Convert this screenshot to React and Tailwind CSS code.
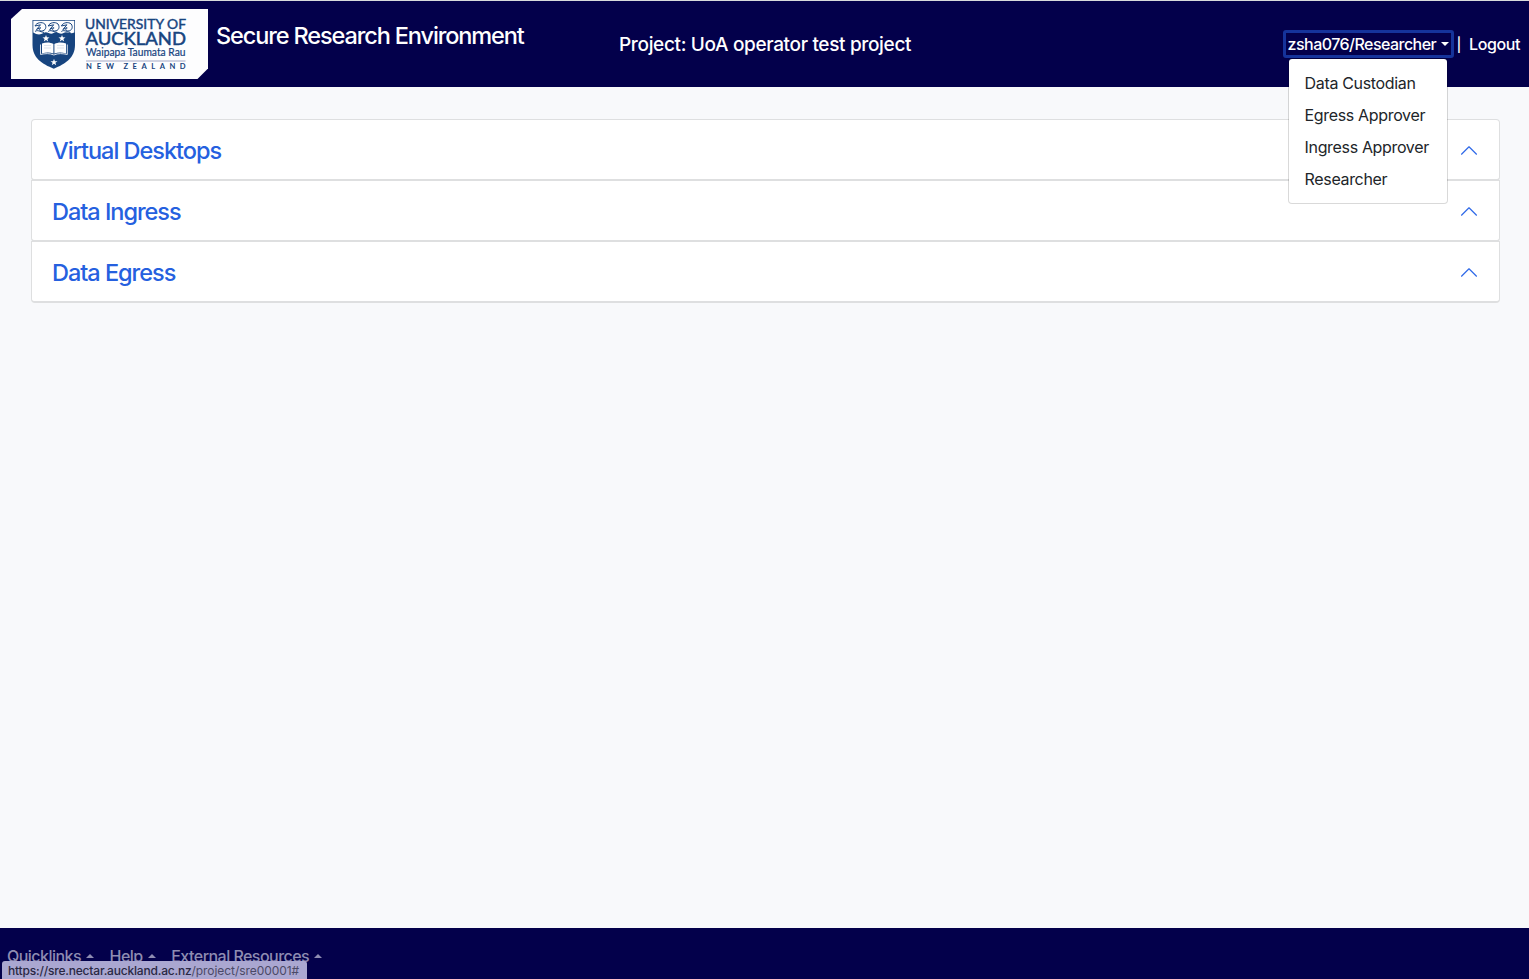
import React from "react";

const star = "M0 -3.6L.9 -1.15L3.5 -1.1L1.4 .45L2.2 3L0 1.5L-2.2 3L-1.4 .45L-3.5 -1.1L-.9 -1.15Z";

function Logo() {
  return (
    <svg width="198" height="71" viewBox="11 9 198 71" className="block shrink-0" role="img" aria-label="University of Auckland">
      <path d="M22 9H208V68.500L197.500 79H11V19Z" fill="#fdfdfe" />
      <path d="M32.500 20H75V45C75 58 65 64 53.800 68.700C42 64 32.500 58 32.500 45Z" fill="#17447f" />
      <path d="M33.300 20.800H74.300V32.500C70 34.800 67 30.500 63.500 33C60 35.300 57 30.500 53.500 33C50 35.300 47 30.500 43.500 33C40 35.300 36.500 34.500 33.300 32.500Z" fill="#fdfdfe" />
      {[0, 13.2, 26.4].map((x) => (
        <path
          key={x}
          transform={`translate(${x} 0)`}
          d="M35 26C36.500 22.500 42 21.500 44.800 24C47 27 45.500 31 41.500 31C38.500 31 39 28 41 28M35 26L40.500 24.800L36.500 29.500L40.500 27.500M35 31.500C37.500 29.500 39.500 31.500 44 32.500"
          fill="none"
          stroke="#17447f"
          strokeWidth="1"
        />
      ))}
      <g fill="#fdfdfe">
        <path d={star} transform="translate(46 38.500)" />
        <path d={star} transform="translate(62 38.500)" />
        <path d={star} transform="translate(54 62.300)" />
        <path d="M42 43.500C46 42 50 42 53.400 44V53.500C50 52 46 52 42 53.500ZM54.400 44C58 42 62 42 66 43.500V53.500C62 52 58 52 54.400 53.500Z" />
      </g>
      <path d="M40.500 44.500V54.500C45 53.500 49.500 53 53.900 55C58 53 63 53.500 67.300 54.500V44.500" fill="none" stroke="#d7dfeb" strokeWidth="1" />
      <path d="M44 45.500H51M44 48H51M57 45.500H64M57 48H64" stroke="#c8d2e1" strokeWidth=".6" />
      <g fill="#17447f" fontFamily="Lato, sans-serif">
        <text x="85" y="29" fontSize="12.800" textLength="101" lengthAdjust="spacingAndGlyphs" stroke="#17447f" strokeWidth=".4">UNIVERSITY OF</text>
        <text x="85.500" y="45.200" fontSize="18" textLength="100.500" lengthAdjust="spacingAndGlyphs" stroke="#17447f" strokeWidth=".5">AUCKLAND</text>
        <text x="86" y="56" fontSize="10.500" textLength="99.500" lengthAdjust="spacingAndGlyphs" stroke="#17447f" strokeWidth=".2">Waipapa Taumata Rau</text>
        <text x="86" y="69" fontSize="7.600" fontWeight="700" textLength="28" lengthAdjust="spacing">NEW</text>
        <text x="123.500" y="69" fontSize="7.600" fontWeight="700" textLength="62" lengthAdjust="spacing">ZEALAND</text>
      </g>
      <path d="M86 61H185.500" stroke="#a3a8c4" strokeWidth="1.200" />
    </svg>
  );
}

function Section({ title }) {
  return (
    <section className="-mb-px flex h-[62px] items-center justify-between rounded-b border border-b-2 border-[#dedfe0] bg-white pr-[22px] pl-5 first:rounded-t">
      <h2 className="pt-[3px] text-[23.5px] font-[450] tracking-[-1.02px] text-[#2560df]">{title}</h2>
      <svg width="16" height="9" viewBox="0 0 16 9" fill="none" stroke="#2f69e8" strokeWidth="1.200" strokeLinecap="round" strokeLinejoin="round" className="mt-px">
        <path d="M.5 8.200L8 .8L15.500 8.200" />
      </svg>
    </section>
  );
}

function FooterItem({ children }) {
  return (
    <a className="flex items-center gap-[5px]">
      {children}
      <svg width="8" height="4" viewBox="0 0 8 4" fill="currentColor"><path d="M0 4L4 0L8 4Z" /></svg>
    </a>
  );
}

export default function App() {
  return (
    <div className="flex h-[979px] w-[1529px] flex-col overflow-hidden bg-[#f8f9fb] font-['Inter',sans-serif]">
      <header className="flex h-[87px] shrink-0 border-t border-[#d8dbdc] bg-[#03004b] text-white">
        <div className="flex w-[619px] pt-2 pl-[11px]">
          <Logo />
          <h1 className="ml-[7px] pt-[9px] text-[23.5px] leading-9 font-medium tracking-[-1.12px] whitespace-nowrap">Secure Research Environment</h1>
        </div>
        <div className="flex flex-1 items-center pt-[3px] text-[19px] font-medium tracking-[-0.34px] whitespace-nowrap">Project: UoA operator test project</div>
        <nav className="flex items-center pr-[9px] text-base font-medium tracking-[-0.4px] whitespace-nowrap">
          <div className="relative">
            <button className="flex h-7 w-[171px] items-center justify-between rounded-[3px] border-3 border-[#15339b] px-[2px] tracking-[-0.54px]">
              zsha076/Researcher
              <svg width="8" height="4" viewBox="0 0 8 4" fill="currentColor"><path d="M0 0H8L4 4Z" /></svg>
            </button>
            <ul className="absolute top-[28px] left-[5px] z-10 h-[146px] w-[160px] rounded border border-black/15 bg-white bg-clip-padding py-2 text-base font-normal tracking-[-0.34px] text-[#212529]">
              {["Data Custodian", "Egress Approver", "Ingress Approver", "Researcher"].map((role) => (
                <li key={role} className="flex h-8 items-center px-4">{role}</li>
              ))}
            </ul>
          </div>
          <span className="ml-[3px] text-[14px]">|</span>
          <a className="ml-[8px]">Logout</a>
        </nav>
      </header>
      <main className="flex-1 pt-8 pr-[29px] pl-[31px]">
        <Section title="Virtual Desktops" />
        <Section title="Data Ingress" />
        <Section title="Data Egress" />
      </main>
      <footer className="relative h-[51px] shrink-0 bg-[#03004b] pt-4 pl-[7px]">
        <div className="flex gap-[15.5px] text-base font-medium tracking-[-0.53px] whitespace-nowrap text-[#8e8cb2]">
          <FooterItem>Quicklinks</FooterItem>
          <FooterItem>Help</FooterItem>
          <FooterItem>External Resources</FooterItem>
        </div>
        <div className="absolute bottom-0 left-[2px] flex h-[18px] w-[305px] items-center rounded-t-[3px] bg-[#aaa7d1] pt-px pl-[6px] text-[12px] tracking-[-0.06px] whitespace-nowrap text-[#4b4966]">
          <span className="font-medium tracking-[-0.19px] text-[#292743]">https://sre.nectar.auckland.ac.nz</span>/project/sre00001#
        </div>
      </footer>
    </div>
  );
}
